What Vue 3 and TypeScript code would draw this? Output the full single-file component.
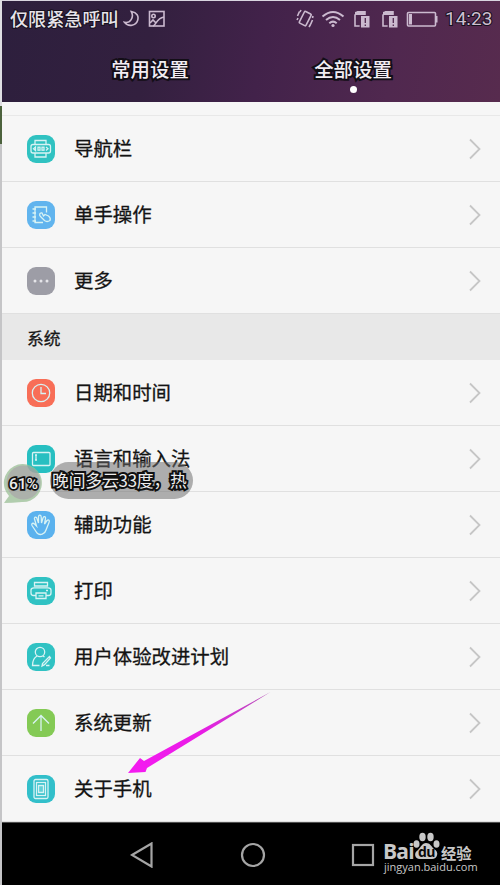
<script setup lang="ts">
interface Row { label: string; icon: string; color: string }

const general: Row[] = [
  { label: '导航栏', icon: 'navbar', color: '#30c2c1' },
  { label: '单手操作', icon: 'onehand', color: '#61b4ee' },
  { label: '更多', icon: 'more', color: '#9d9da6' },
]
const system: Row[] = [
  { label: '日期和时间', icon: 'clock', color: '#f86e57' },
  { label: '语言和输入法', icon: 'input', color: '#27bfc1' },
  { label: '辅助功能', icon: 'hand', color: '#5bb2ee' },
  { label: '打印', icon: 'printer', color: '#30c2c3' },
  { label: '用户体验改进计划', icon: 'user', color: '#30c2c3' },
  { label: '系统更新', icon: 'update', color: '#84ca55' },
  { label: '关于手机', icon: 'phone', color: '#32bfca' },
]
const sections = [
  { title: '', rows: general },
  { title: '系统', rows: system },
]
</script>

<template>
  <div class="page">
    <div class="edge"></div>
    <div class="screen">
      <header class="header">
        <div class="status">
          <span class="carrier">仅限紧急呼叫</span>
          <svg class="moon" width="17" height="18" viewBox="0 0 17 18"><path d="M8.3 1.5C14 2.500 16 6 14.600 10.500C13 15.500 5.500 17.500 1.500 12.300C7 13.500 11.500 7.500 8.300 1.500Z" /></svg>
          <svg class="pic" width="18" height="18" viewBox="0 0 18 18"><rect x="1.500" y="1.500" width="14.500" height="14.500" /><circle cx="5.500" cy="6" r="1.700" /><path d="M2 13L5 10L7.500 12.500M5 16C8.500 15 8 8.500 16 7" /></svg>
          <span class="spacer"></span>
          <svg class="vibrate" width="18" height="19" viewBox="0 0 18 19"><rect x="5.500" y="3" width="7.500" height="13" rx="1" transform="rotate(27 9 9.500)" /><path d="M3.500 2.500L1.500 7M5 1L4 3M16.500 11L14.500 15.500M14.500 15.500L13 18M2 9L1 11M17 7L16.500 9" /></svg>
          <svg class="wifi" width="24" height="18" viewBox="0 0 24 18"><path d="M1.500 6.500Q12 -2.500 22.500 6.500M5 10Q12 4 19 10M8.300 13.200Q12 10 15.700 13.200" /><circle cx="12" cy="15.500" r="1.600" /></svg>
          <svg v-for="n in 2" :key="n" class="sim" width="18" height="18" viewBox="0 0 18 18"><path class="line" d="M8 16H2V5L5 1.700H12V5" /><path class="solid" d="M2 2L5 1H12V5H2ZM8 6H16.500V17.500H8Z" /><path class="cut" d="M12.300 8V13M12.300 14.500V16M7.300 6V17" /></svg>
          <svg class="battery" width="33" height="18" viewBox="0 0 33 18"><rect x="1.500" y="2.500" width="28" height="13.500" rx="1" /><path class="solid" d="M3 4H6V14.500H3ZM30 6H31.500V12.500H30Z" /></svg>
          <span class="time">14:23</span>
        </div>
        <nav class="tabs">
          <div class="tab">常用设置</div>
          <div class="tab right">全部设置<i class="dot"></i></div>
        </nav>
      </header>

      <main class="list">
        <div class="stub"></div>
        <section v-for="section in sections" :key="section.title">
          <h2 v-if="section.title" class="section-title">{{ section.title }}</h2>
          <div v-for="row in section.rows" :key="row.label" class="row">
            <svg class="icon" width="30" height="30" viewBox="0 0 30 30">
              <rect class="tile" x="1" y="1" width="28" height="28" rx="9" :fill="row.color" />
              <template v-if="row.icon === 'navbar'">
                <path d="M9 10V6.500H20V10M9 19V23H20V19" /><rect x="5" y="10.500" width="19.500" height="8.500" rx="2" />
                <path d="M9.500 13L7.500 14.800L9.500 16.500ZM20 13L22 14.800L20 16.500" /><rect x="12" y="13.200" width="2" height="3" /><rect x="16" y="13.200" width="2" height="3" />
              </template>
              <template v-else-if="row.icon === 'onehand'">
                <path d="M20.500 12.500V7H9V22.500H17M6.500 9H10M6.500 13H10M6.500 17H10M6.500 21H10" />
                <path d="M16 13C13.500 12.500 13 15 14.500 16.500L18.500 20.500Q21 22.500 24 20.500Q25 18 22.500 16L19 14.500L17.500 16Z" />
              </template>
              <g v-else-if="row.icon === 'more'" class="dots"><circle cx="9" cy="15" r="1.500" /><circle cx="15" cy="15" r="1.500" /><circle cx="21" cy="15" r="1.500" /></g>
              <template v-else-if="row.icon === 'clock'"><circle cx="15" cy="15" r="8.700" /><path d="M15 9V15.500H20" /></template>
              <template v-else-if="row.icon === 'input'"><rect x="6.500" y="8.500" width="17.500" height="13" rx="1" /><path d="M9 11H11M10 11V16M9 16H11" /></template>
              <path v-else-if="row.icon === 'hand'" d="M11 23L6 15.500C5 13.500 7 12.500 8.500 14L10.500 16L8.500 9C8 7 10.500 6.500 11 8.500L12.500 13L12.500 7C12.500 4.500 15 4.500 15.200 7L15.500 13L17 8C17.500 6 20 6.500 19.500 8.500L18.500 14L21 10.500C22.500 9 24 10.500 23 12.500L20 20C19 24 14 26 11 23Z" />
              <template v-else-if="row.icon === 'printer'"><path d="M8.500 6.500H21.500V10H8.500ZM10 22.500V19.500H7.500Q5 19.500 5 17V14Q5 11.800 8 11.800H22Q25 11.800 25 14V17Q25 19.500 22.500 19.500H20M10 22.500V17H20V22.500Z" /><path d="M12.500 19.800H17.500M20 14.500H22" /></template>
              <template v-else-if="row.icon === 'user'"><circle cx="14" cy="10" r="4.700" /><path d="M11 14Q6.500 16.500 6.500 23.500H13.500M17 14L18.500 15M23.500 14.500L16.500 21.500L16 24L18.500 22.700L24.500 16ZM20 23.500H23.500" /></template>
              <path v-else-if="row.icon === 'update'" d="M15 23V8M7 15.500L15 7.500L23 15.500" />
              <template v-else><rect x="8" y="5.500" width="14" height="19" rx="1.500" /><rect x="10.500" y="8.500" width="9" height="13" /><path class="faint" d="M12.500 11.500H17.500V18.500H12.500Z" /></template>
            </svg>
            <span class="label">{{ row.label }}</span>
            <svg class="chevron" width="12" height="22" viewBox="0 0 12 22"><path d="M1 1.500L10.500 11L1 20.500" /></svg>
          </div>
        </section>
      </main>

      <footer class="navigation">
        <svg width="24" height="26" viewBox="0 0 24 26"><path d="M2 13L21.500 1.500V24.500Z" /></svg>
        <svg width="26" height="26" viewBox="0 0 26 26"><circle cx="13" cy="13" r="11" /></svg>
        <svg width="24" height="24" viewBox="0 0 24 24"><rect x="2" y="2" width="20" height="20" /></svg>
      </footer>
    </div>

    <div class="brand">
      <div class="brand-name">
        <span class="bai">Bai</span>
        <span class="paw"><svg width="27" height="28" viewBox="0 0 27 28"><ellipse cx="3.500" cy="12" rx="3" ry="3.800" /><ellipse cx="9.500" cy="5" rx="3.200" ry="4.200" /><ellipse cx="17.500" cy="5" rx="3.200" ry="4.200" /><ellipse cx="23.500" cy="12" rx="3" ry="3.800" /><path d="M13 11C17 11 18 14 21 17C27 20 24 28 18 27H8C2 28 0 21 5 18C8 15 9 11 13 11Z" /></svg><b>du</b></span>
        <span class="cn">经验</span>
      </div>
      <div class="site">jingyan.baidu.com</div>
    </div>

    <div class="weather">晚间多云33度，热</div>
    <div class="percent">
      <svg width="43" height="43" viewBox="0 0 43 43"><path d="M2 41L7 34A19 19 0 1 1 20 40Q10 41 2 41Z" /><circle cx="21.500" cy="20.500" r="17" /></svg>
      <span>61%</span>
    </div>
    <svg class="arrow" width="146" height="86" viewBox="0 0 146 86">
      <defs><linearGradient id="shaft" x1="0" y1="1" x2="1" y2="0"><stop offset="0" stop-color="#f51bf1" /><stop offset=".5" stop-color="#e91be6" /><stop offset="1" stop-color="#b354b5" /></linearGradient></defs>
      <path d="M1 82L13 67L17 70L143.500 1L20 77L18.500 81Z" fill="url(#shaft)" />
    </svg>
  </div>
</template>

<style>
body { margin: 0; background: #fff; }
</style>
<style scoped>
.page { position: relative; display: flex; width: 500px; height: 885px; overflow: hidden; font-family: "Noto Sans CJK SC", sans-serif; }
.edge { flex: none; width: 2px; background: linear-gradient(#dfdfe3 106px, #4c623d 106px, #4c623d 144px, #c5c5c7 144px); }
.screen { flex: 1; display: flex; flex-direction: column; min-width: 0; }
svg { flex: none; fill: none; }
.header { height: 102px; box-sizing: border-box; border-top: 1px solid #d9d5e0; background: linear-gradient(100deg, #2d1f3d 0%, #33203f 30%, #42224a 52%, #50284f 78%, #572b4e 100%) border-box; }
.status { height: 35px; display: flex; align-items: center; padding: 0 7px 0 8px; box-sizing: border-box; stroke: #cbbacf; stroke-width: 1.6; }
.carrier, .time { color: #e7e3e9; font-size: 18.1px; line-height: 34px; -webkit-text-stroke: 2px #16101d; paint-order: stroke fill; white-space: nowrap; }
.carrier { font-weight: 500; line-height: 32px; padding-bottom: 2px; }
.time { width: 48px; margin-left: 6px; color: #cdbfd0; font-family: Roboto, sans-serif; font-size: 19px; }
.moon { margin-left: 4px; }
.pic { margin-left: 8px; }
.spacer { flex: 1; }
.vibrate { margin-right: 7px; }
.wifi { margin-right: 8px; stroke-width: 2; }
.wifi circle, .solid { fill: #cbbacf; stroke: none; }
.sim { margin-right: 10px; }
.sim + .battery { margin-left: -3px; }
.cut { stroke: #50284f; stroke-width: 1.3; }
.tabs { display: flex; padding-left: 46.5px; }
.tab { position: relative; width: 203px; height: 66px; color: #f2edf3; font-size: 19.4px; line-height: 65px; text-align: center; font-weight: 500; -webkit-text-stroke: 4px #130e17; paint-order: stroke fill; }
.dot { position: absolute; left: 98px; top: 50px; width: 7px; height: 7px; border-radius: 50%; background: #fff; }
.list { height: 720px; background: #f6f6f6; }
.stub { height: 14px; box-sizing: border-box; border-bottom: 1px solid #e8e8e8; }
.row { height: 66px; box-sizing: border-box; display: flex; align-items: center; padding: 0 19px 0 24px; border-bottom: 1px solid #e0e0e0; }
.section-title { height: 46px; margin: 0; padding-left: 25px; background: #e8e8e8; color: #171717; font-size: 16.8px; line-height: 48px; font-weight: 400; -webkit-text-stroke: .3px #171717; }
.icon { stroke: #d8f3f4; stroke-width: 1.3; }
.tile { stroke: none; }
.dots { fill: #e5e5e9; stroke: none; }
.faint { fill: #62cfd6; }
.label { margin-left: 18px; padding-bottom: 2px; color: #131313; font-size: 19.4px; line-height: 62px; flex: 1; white-space: nowrap; -webkit-text-stroke: .3px #131313; }
.chevron { stroke: #c6c6c6; stroke-width: 1.8; }
.navigation { height: 63px; box-sizing: border-box; border-top: 1px solid #505050; display: flex; align-items: center; gap: 85.5px; padding: 2px 0 0 128px; background: #000; stroke: #a5a5a5; stroke-width: 2.2; }
.navigation svg:nth-child(2) { margin-right: -.5px; }
.brand { position: absolute; left: 383px; top: 829px; width: 98px; color: #c8c8c8; }
.brand-name { display: flex; align-items: flex-end; height: 31px; }
.bai { width: 30px; margin-bottom: -5px; font: bold 21px/27px "Open Sans", sans-serif; letter-spacing: -.8px; }
.paw { position: relative; width: 27px; height: 28px; }
.paw svg { display: block; fill: #c8c8c8; }
.paw b { position: absolute; left: 5px; top: 11px; color: #080808; font: bold 14px/17px "Open Sans", sans-serif; letter-spacing: -.5px; }
.cn { margin-left: 1px; margin-bottom: -3px; font-size: 15.3px; line-height: 22px; font-weight: 700; white-space: nowrap; }
.site { margin-top: 1px; padding-left: 1px; font: 11px/12px "Open Sans", sans-serif; white-space: nowrap; }
.weather { position: absolute; left: 50px; top: 462px; width: 143px; height: 37px; box-sizing: border-box; padding-left: 2px; border-radius: 19px; background: rgba(105, 105, 105, .52); color: #ededed; font-size: 16.8px; line-height: 37px; letter-spacing: -.15px; white-space: nowrap; -webkit-text-stroke: 4px #101010; paint-order: stroke fill; }
.percent { position: absolute; left: 2px; top: 462px; width: 43px; height: 43px; }
.percent svg { position: absolute; opacity: .85; }
.percent path { fill: #98bd93; fill-opacity: .85; }
.percent circle { fill: #a0a59f; }
.percent span { position: absolute; left: 7px; top: 12px; color: #ededed; font: 500 15.500px/20px Roboto, sans-serif; -webkit-text-stroke: 3.5px #101010; paint-order: stroke fill; }
.arrow { position: absolute; left: 127px; top: 691px; }
</style>
